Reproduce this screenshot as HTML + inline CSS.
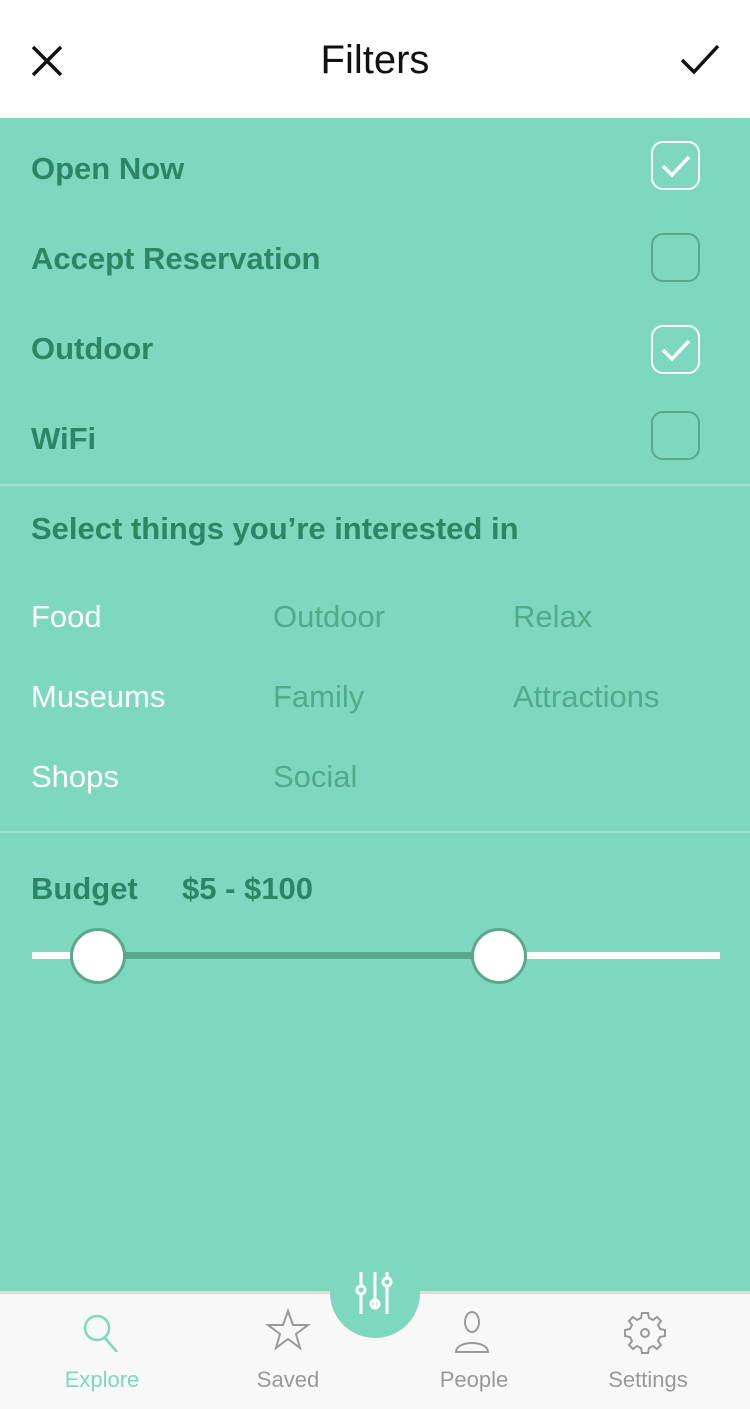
<!DOCTYPE html><html><head><style>
body{margin:0;width:750px;height:1406px;position:relative;overflow:hidden;font-family:"Liberation Sans",sans-serif;background:#7dd8bf}
.hdr{position:absolute;top:0;left:0;width:750px;height:118px;background:#fff}
.t{position:absolute;left:0;width:750px;text-align:center;top:38px;font-size:40px;color:#111}
.a{position:absolute}
.lbl{position:absolute;left:31px;font-size:31px;font-weight:bold;color:#2e8566}
.cb{position:absolute;left:651px;width:45px;height:45px;border:2px solid #5aa88c;border-radius:12px}
.cb.on{border-color:#fff}
.hr{position:absolute;left:0;width:750px;height:2px;background:#9ee4d1}
.tag{position:absolute;font-size:31px;color:#fff}
.tag.off{color:#54a98b}
.tab{position:absolute;top:1291px;left:0;width:750px;height:115px;background:#f8f8f8;border-top:3px solid #ddd}
.tl{position:absolute;top:1367px;font-size:22px;color:#999;text-align:center;width:160px}
</style></head><body>
<div class="hdr"><div class="t">Filters</div>
<svg class="a" style="left:30px;top:44px" width="34" height="34"><path d="M3 3L31 31M31 3L3 31" stroke="#111" stroke-width="3.5"/></svg>
<svg class="a" style="left:680px;top:42px" width="40" height="34"><path d="M2 18L14 30L38 4" stroke="#111" stroke-width="3.5" fill="none"/></svg>
</div>
<div class="lbl" style="top:151px">Open Now</div>
<div class="lbl" style="top:241px">Accept Reservation</div>
<div class="lbl" style="top:331px">Outdoor</div>
<div class="lbl" style="top:421px">WiFi</div>
<div class="cb on" style="top:141px"><svg width="45" height="45"><path d="M10 23L19 32L36 14" stroke="#fff" stroke-width="3.5" fill="none"/></svg></div>
<div class="cb" style="top:233px"></div>
<div class="cb on" style="top:325px"><svg width="45" height="45"><path d="M10 23L19 32L36 14" stroke="#fff" stroke-width="3.5" fill="none"/></svg></div>
<div class="cb" style="top:411px"></div>
<div class="hr" style="top:484px"></div>
<div class="lbl" style="top:511px">Select things you’re interested in</div>
<div class="tag" style="left:31px;top:599px">Food</div>
<div class="tag off" style="left:273px;top:599px">Outdoor</div>
<div class="tag off" style="left:513px;top:599px">Relax</div>
<div class="tag" style="left:31px;top:679px">Museums</div>
<div class="tag off" style="left:273px;top:679px">Family</div>
<div class="tag off" style="left:513px;top:679px">Attractions</div>
<div class="tag" style="left:31px;top:759px">Shops</div>
<div class="tag off" style="left:273px;top:759px">Social</div>
<div class="hr" style="top:831px"></div>
<div class="lbl" style="top:871px">Budget</div>
<div class="lbl" style="left:182px;top:871px">$5 - $100</div>
<div class="a" style="left:32px;top:952px;width:688px;height:7px;background:#fff"></div>
<div class="a" style="left:97px;top:952px;width:401px;height:7px;background:#5aa88c"></div>
<div class="a" style="left:70px;top:928px;width:50px;height:50px;border:3px solid #5aa88c;border-radius:50%;background:#fff"></div>
<div class="a" style="left:471px;top:928px;width:50px;height:50px;border:3px solid #5aa88c;border-radius:50%;background:#fff"></div>
<div class="tab"></div>
<div class="a" style="left:330px;top:1248px;width:90px;height:90px;border-radius:50%;background:#7dd8bf"></div>
<svg class="a" style="left:352px;top:1272px" width="46" height="44" fill="none" stroke="#fff" stroke-width="3"><path d="M9 0V14M9 22V42M23 0V36M35 0V6M35 14V42"/><circle cx="9" cy="18" r="4"/><circle cx="23" cy="32" r="4"/><circle cx="35" cy="10" r="4"/></svg>
<svg class="a" style="left:82px;top:1312px" width="40" height="40" fill="none" stroke="#7dd8bf" stroke-width="2.5"><circle cx="15" cy="16" r="12"/><path d="M23 26L35 40"/></svg>
<svg class="a" style="left:265px;top:1308px" width="46" height="44" fill="none" stroke="#999" stroke-width="2"><path d="M23 3L28 17L43 17L31 26L35 40L23 31L11 40L15 26L3 17L18 17Z"/></svg>
<svg class="a" style="left:453px;top:1310px" width="38" height="46" fill="none" stroke="#999" stroke-width="2"><ellipse cx="19" cy="12" rx="7" ry="10"/><path d="M3 42C3 30 35 30 35 42Z"/></svg>
<svg class="a" style="left:622px;top:1310px" width="46" height="46" fill="none" stroke="#999" stroke-width="2"><circle cx="23" cy="23" r="4"/><path d="M20 3h6l1 5 4 2 4-3 4 4-3 4 2 4 5 1v6l-5 1-2 4 3 4-4 4-4-3-4 2-1 5h-6l-1-5-4-2-4 3-4-4 3-4-2-4-5-1v-6l5-1 2-4-3-4 4-4 4 3 4-2z"/></svg>
<div class="tl" style="left:22px;color:#7dd8bf">Explore</div>
<div class="tl" style="left:208px">Saved</div>
<div class="tl" style="left:394px">People</div>
<div class="tl" style="left:568px">Settings</div>
</body></html>
